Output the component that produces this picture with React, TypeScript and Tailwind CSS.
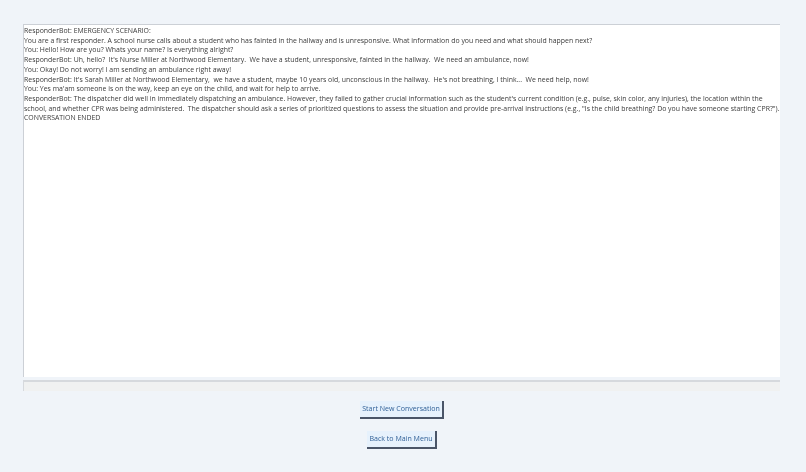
// App.tsx
import React from 'react';

const LINES = [
  'ResponderBot: EMERGENCY SCENARIO:',
  'You are a first responder. A school nurse calls about a student who has fainted in the hallway and is unresponsive. What information do you need and what should happen next?',
  'You: Hello! How are you? Whats your name? Is everything alright?',
  "ResponderBot: Uh, hello?  It's Nurse Miller at Northwood Elementary.  We have a student, unresponsive, fainted in the hallway.  We need an ambulance, now!",
  'You: Okay! Do not worry! I am sending an ambulance right away!',
  "ResponderBot: It's Sarah Miller at Northwood Elementary,  we have a student, maybe 10 years old, unconscious in the hallway.  He's not breathing, I think...  We need help, now!",
  "You: Yes ma'am someone is on the way, keep an eye on the child, and wait for help to arrive.",
  'ResponderBot: The dispatcher did well in immediately dispatching an ambulance. However, they failed to gather crucial information such as the student\'s current condition (e.g., pulse, skin color, any injuries), the location within the school, and whether CPR was being administered.  The dispatcher should ask a series of prioritized questions to assess the situation and provide pre-arrival instructions (e.g., "Is the child breathing? Do you have someone starting CPR?").',
  'CONVERSATION ENDED',
];

const Btn: React.FC<{ label: string }> = ({ label }) => (
  <button className="h-[18px] w-fit px-[2.5px] bg-[#e6f1fc] border-r-2 border-b-2 border-[#4a5568] text-[#2f5f96] text-[7.05px] leading-none whitespace-nowrap">
    <span className="block blur-[0.25px]">{label}</span>
  </button>
);

export default function App() {
  return (
    <div className="h-[472px] w-[806px] overflow-hidden bg-[#f0f4f9] pt-[24px] pl-[23px] pr-[26px] font-['Open_Sans',sans-serif]">
      {/* Transcript */}
      <div className="h-[353px] bg-white border-t border-l border-[#ccd0d6] pt-[1px] text-[6.92px] leading-[9.7px] text-[#3a3a3a] whitespace-pre-wrap">
        <div className="blur-[0.25px]">
          {LINES.map((l, i) => (
            <div key={i}>{l}</div>
          ))}
        </div>
      </div>

      {/* Input */}
      <div className="mt-[3px] h-[11px] bg-[#f0f1f1] border-t-2 border-l border-[#d6d9dd]" />

      <div className="flex flex-col items-center gap-[12px] mt-[10px] pl-[1px]">
        <Btn label="Start New Conversation" />
        <Btn label="Back to Main Menu" />
      </div>
    </div>
  );
}
